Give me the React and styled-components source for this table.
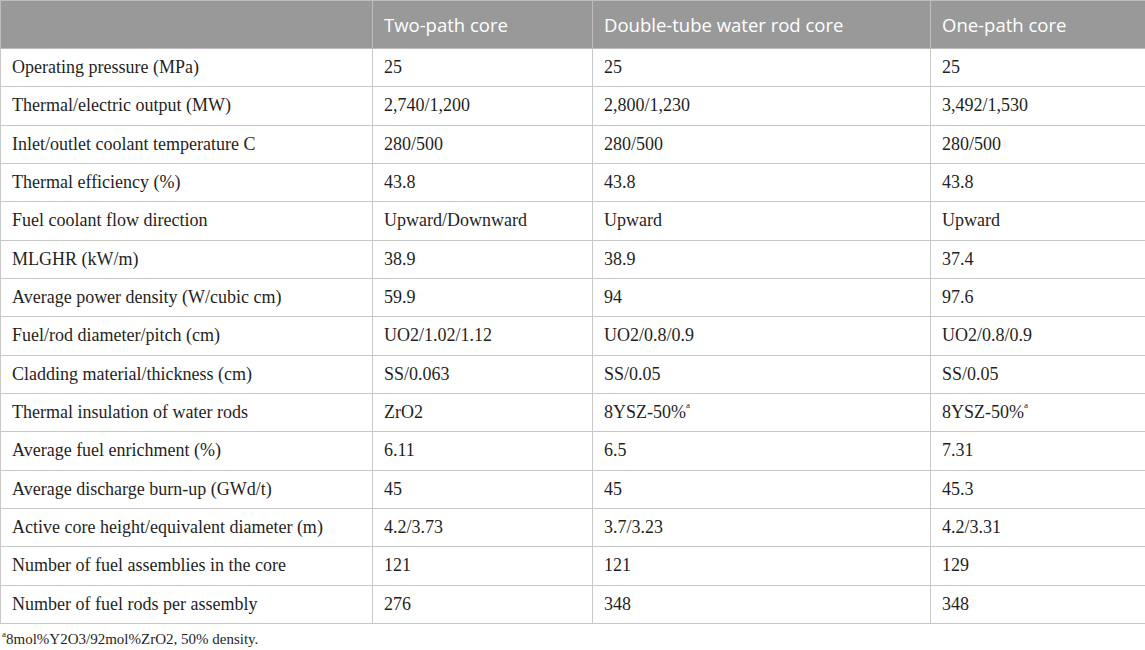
import styled, { createGlobalStyle } from 'styled-components';

const GlobalStyle = createGlobalStyle`
  html, body {
    margin: 0;
    padding: 0;
    background: #ffffff;
  }
`;

const columns = ['', 'Two-path core', 'Double-tube water rod core', 'One-path core'];

const rows = [
  ['Operating pressure (MPa)', '25', '25', '25'],
  ['Thermal/electric output (MW)', '2,740/1,200', '2,800/1,230', '3,492/1,530'],
  ['Inlet/outlet coolant temperature C', '280/500', '280/500', '280/500'],
  ['Thermal efficiency (%)', '43.8', '43.8', '43.8'],
  ['Fuel coolant flow direction', 'Upward/Downward', 'Upward', 'Upward'],
  ['MLGHR (kW/m)', '38.9', '38.9', '37.4'],
  ['Average power density (W/cubic cm)', '59.9', '94', '97.6'],
  ['Fuel/rod diameter/pitch (cm)', 'UO2/1.02/1.12', 'UO2/0.8/0.9', 'UO2/0.8/0.9'],
  ['Cladding material/thickness (cm)', 'SS/0.063', 'SS/0.05', 'SS/0.05'],
  ['Thermal insulation of water rods', 'ZrO2', '8YSZ-50%|a', '8YSZ-50%|a'],
  ['Average fuel enrichment (%)', '6.11', '6.5', '7.31'],
  ['Average discharge burn-up (GWd/t)', '45', '45', '45.3'],
  ['Active core height/equivalent diameter (m)', '4.2/3.73', '3.7/3.23', '4.2/3.31'],
  ['Number of fuel assemblies in the core', '121', '121', '129'],
  ['Number of fuel rods per assembly', '276', '348', '348'],
];

const Page = styled.div`
  width: 1145px;
`;

const Table = styled.table`
  width: 1145px;
  border-collapse: collapse;
  table-layout: fixed;
`;

const HeadCell = styled.th`
  background: #999999;
  color: #ffffff;
  font-family: "Open Sans", "Noto Sans", sans-serif;
  font-weight: 400;
  font-size: 18.5px;
  text-align: left;
  height: 48px;
  padding: 0 11px;
  border: 1px solid #bdbdbd;
  box-sizing: border-box;
  white-space: nowrap;
`;

const Row = styled.tr`
  height: 38.33px;
`;

const Cell = styled.td`
  font-family: "Liberation Serif", "Times New Roman", serif;
  font-size: 18px;
  color: #1f1f1f;
  padding: 0 11px;
  border: 1px solid #c8c8c8;
  box-sizing: border-box;
  white-space: nowrap;
`;

const Sup = styled.sup`
  font-size: 9px;
  vertical-align: top;
  position: relative;
  top: -2px;
`;

const Note = styled.p`
  margin: 7px 0 0 2px;
  font-family: "Liberation Serif", "Times New Roman", serif;
  font-size: 15px;
  color: #1f1f1f;
`;

const widths = [372, 220, 338, 215];

function renderValue(v) {
  const [text, mark] = v.split('|');
  return (
    <>
      {text}
      {mark && <Sup>{mark}</Sup>}
    </>
  );
}

export default function App() {
  return (
    <Page>
      <GlobalStyle />
      <Table>
        <colgroup>
          {widths.map((w, i) => (
            <col key={i} style={{ width: w }} />
          ))}
        </colgroup>
        <thead>
          <tr>
            {columns.map((c, i) => (
              <HeadCell key={i}>{c}</HeadCell>
            ))}
          </tr>
        </thead>
        <tbody>
          {rows.map((r, i) => (
            <Row key={i}>
              {r.map((v, j) => (
                <Cell key={j}>{renderValue(v)}</Cell>
              ))}
            </Row>
          ))}
        </tbody>
      </Table>
      <Note>
        <Sup>a</Sup>8mol%Y2O3/92mol%ZrO2, 50% density.
      </Note>
    </Page>
  );
}
